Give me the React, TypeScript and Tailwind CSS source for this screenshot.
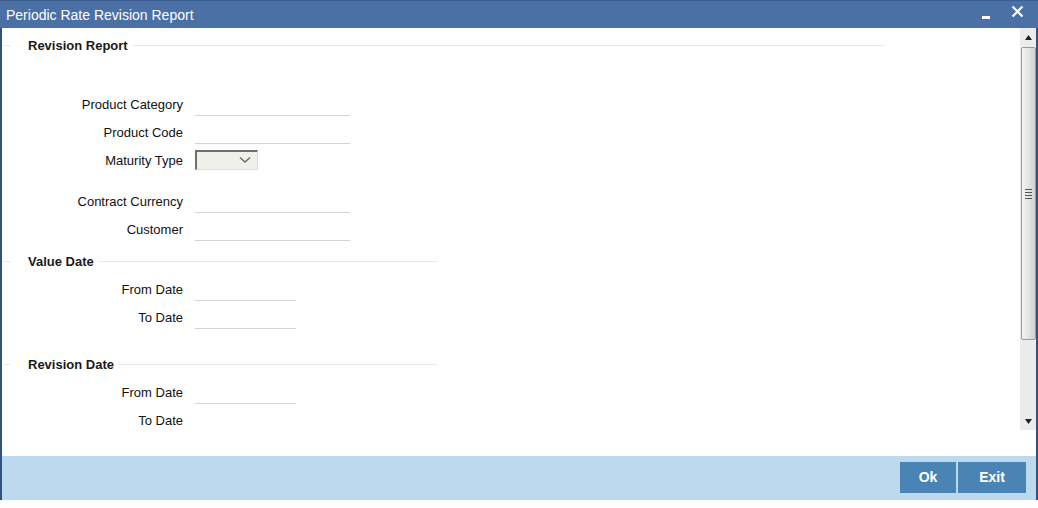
import React from 'react'

const font = { fontFamily: '"Liberation Sans", Arial, sans-serif' }

function Legend({ title, lineEnd }: { title: string; lineEnd: number }) {
  return (
    <div className="flex items-center h-[20px]" style={{ width: lineEnd - 2 }}>
      <div className="ml-[2px] w-[6px] h-px bg-[#e6e6e6]" />
      <span className="ml-[18px] pt-[2px] text-[13px] font-bold text-[#1a1a1a] whitespace-nowrap">{title}</span>
      <div className="ml-[5px] flex-1 h-px bg-[#e8e8e8]" />
    </div>
  )
}

function Field({ label, width = 155, children }: { label: string; width?: number; children?: React.ReactNode }) {
  return (
    <div className="flex items-center h-[28px]">
      <div className="w-[181px] pt-[2px] text-right text-[13px] text-[#111] whitespace-nowrap">{label}</div>
      <div className="ml-[12px] h-[28px] flex items-center">
        {children ?? <div className="h-[24px] mt-[-1px] border-b border-[#d4d4d4]" style={{ width }} />}
      </div>
    </div>
  )
}

function SelectBox() {
  return (
    <div className="w-[63px] h-[20px] bg-[#f0efea] border-t-2 border-l-2 border-t-[#6f6f6f] border-l-[#6f6f6f] border-b border-r border-b-[#dcdcdc] border-r-[#dcdcdc] flex items-center justify-end pr-[6px]">
      <svg width="12" height="8" viewBox="0 0 12 8">
        <path d="M1 1.5 L6 6 L11 1.5" fill="none" stroke="#6b6b6b" strokeWidth="1.4" />
      </svg>
    </div>
  )
}

function ScrollBar() {
  return (
    <div className="w-[16px] h-[402px] bg-[#ececec] flex flex-col items-center">
      <div className="h-[18px] w-full flex items-center justify-center">
        <svg width="7" height="5" viewBox="0 0 7 5"><path d="M0 5 L3.5 0 L7 5 Z" fill="#222" /></svg>
      </div>
      <div className="mt-[1px] w-[15px] h-[293px] rounded-[2px] border border-[#9a9a9a] bg-gradient-to-r from-[#f4f4f4] via-[#e4e4e4] to-[#cfcfcf] flex flex-col items-center justify-center gap-[2px]">
        <div className="w-[7px] h-px bg-[#555]" />
        <div className="w-[7px] h-px bg-[#555]" />
        <div className="w-[7px] h-px bg-[#555]" />
        <div className="w-[7px] h-px bg-[#555]" />
      </div>
      <div className="flex-1" />
      <div className="h-[18px] w-full flex items-center justify-center">
        <svg width="7" height="5" viewBox="0 0 7 5"><path d="M0 0 L7 0 L3.5 5 Z" fill="#222" /></svg>
      </div>
    </div>
  )
}

export default function App() {
  return (
    <div className="w-[1038px] h-[508px] bg-white overflow-hidden" style={font}>
      <div className="h-[500px] flex flex-col">
        {/* title bar */}
        <div className="h-[28px] bg-[#4a70a6] border-t border-[#3b5e90] flex items-center pl-[6px] pr-[14px] text-white">
          <span className="text-[14px] pt-[1px]">Periodic Rate Revision Report</span>
          <div className="flex-1" />
          <div className="w-[8px] h-[3px] bg-white mt-[6px] mr-[21px]" />
          <svg width="13" height="13" viewBox="0 0 13 13" className="mt-[-6px]">
            <path d="M1.5 1.5 L11.5 11.5 M11.5 1.5 L1.5 11.5" stroke="#fff" strokeWidth="2.2" />
          </svg>
        </div>

        <div className="flex-1 flex flex-col border-l-2 border-r-2 border-[#2f5283]">
          {/* body */}
          <div className="h-[402px] flex">
            <div className="flex-1 overflow-hidden">
              <div className="mt-[7px]">
                <Legend title="Revision Report" lineEnd={884} />
              </div>
              <div className="mt-[35px]">
                <Field label="Product Category" />
                <Field label="Product Code" />
                <Field label="Maturity Type">
                  <div className="mt-[-1px]"><SelectBox /></div>
                </Field>
                <div className="mt-[13px]">
                  <Field label="Contract Currency" />
                  <Field label="Customer" />
                </div>
              </div>
              <div className="mt-[8px]">
                <Legend title="Value Date" lineEnd={437} />
              </div>
              <div className="mt-[4px]">
                <Field label="From Date" width={101} />
                <Field label="To Date" width={101} />
              </div>
              <div className="mt-[23px]">
                <Legend title="Revision Date" lineEnd={437} />
              </div>
              <div className="mt-[4px]">
                <Field label="From Date" width={101} />
                <Field label="To Date" width={101} />
              </div>
            </div>
            <ScrollBar />
          </div>
          <div className="h-[26px] bg-white" />

          {/* footer */}
          <div className="h-[44px] bg-[#bdd9ed] flex items-start justify-end pt-[6px] pr-[10px]">
            <button className="w-[56px] h-[31px] bg-[#4a84b4] text-white text-[14px] font-bold">Ok</button>
            <div className="w-[2px] h-[31px] bg-[#bdd9ed]" />
            <button className="w-[68px] h-[31px] bg-[#4a84b4] text-white text-[14px] font-bold">Exit</button>
          </div>
        </div>
      </div>
    </div>
  )
}
